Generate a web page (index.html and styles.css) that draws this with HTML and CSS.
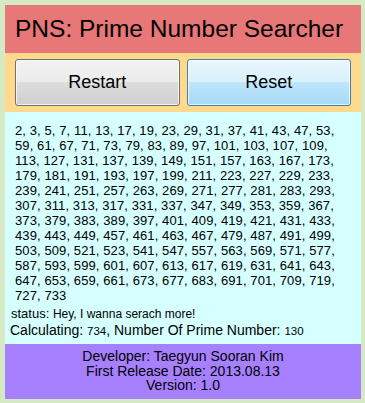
FILE: index.html
```html
<!DOCTYPE html>
<html lang="en">
<head>
  <meta charset="UTF-8">
  <meta name="viewport" content="width=device-width, initial-scale=1.0">
  <title>PNS: Prime Number Searcher</title>
  <link rel="stylesheet" href="styles.css">
</head>
<body>
  <div id="app">
    <h1 id="title">PNS: Prime Number Searcher</h1>

    <div id="controls">
      <button class="btn">Restart</button>
      <button class="btn btn-active">Reset</button>
    </div>

    <div id="output">
      <div id="primes">2, 3, 5, 7, 11, 13, 17, 19, 23, 29, 31, 37, 41, 43, 47, 53, 59, 61, 67, 71, 73, 79, 83, 89, 97, 101, 103, 107, 109, 113, 127, 131, 137, 139, 149, 151, 157, 163, 167, 173, 179, 181, 191, 193, 197, 199, 211, 223, 227, 229, 233, 239, 241, 251, 257, 263, 269, 271, 277, 281, 283, 293, 307, 311, 313, 317, 331, 337, 347, 349, 353, 359, 367, 373, 379, 383, 389, 397, 401, 409, 419, 421, 431, 433, 439, 443, 449, 457, 461, 463, 467, 479, 487, 491, 499, 503, 509, 521, 523, 541, 547, 557, 563, 569, 571, 577, 587, 593, 599, 601, 607, 613, 617, 619, 631, 641, 643, 647, 653, 659, 661, 673, 677, 683, 691, 701, 709, 719, 727, 733</div>
      <div id="status">status: <span class="small">Hey, I wanna serach more!</span></div>
      <div id="calc">Calculating: <span class="small">734</span>, Number Of Prime Number: <span class="small">130</span></div>
    </div>

    <div id="footer">
      <div>Developer: Taegyun Sooran Kim</div>
      <div>First Release Date: 2013.08.13</div>
      <div>Version: 1.0</div>
    </div>
  </div>
</body>
</html>
```

FILE: styles.css
```css
body {
  font-family: 'Liberation Sans', Arial, sans-serif;
  margin: 0;
  padding: 5px 4px 5px 5px;
  background: #d5e9c5;
  color: #000;
}

#app {
  width: 356px;
  display: flex;
  flex-direction: column;
}

#title {
  margin: 0;
  height: 48px;
  padding: 0 10px;
  font-size: 24.5px;
  font-weight: normal;
  line-height: 48px;
  background: #e87777;
}

#controls {
  display: flex;
  gap: 7px;
  padding: 6px 10px;
  background: #ffd98c;
}

.btn {
  flex: 1;
  height: 47px;
  font-family: 'Liberation Sans', Arial, sans-serif;
  font-size: 18px;
  color: #000;
  border: 1px solid #707070;
  border-radius: 3px;
  box-shadow: inset 0 0 0 1px rgba(255, 255, 255, 0.7);
  background: linear-gradient(#f2f2f2, #ebebeb 50%, #dddddd 50%, #cfcfcf);
  cursor: pointer;
}

.btn-active {
  border-color: #3c7fb1;
  background: linear-gradient(#eaf6fd, #d9f0fc 50%, #bee6fd 50%, #a7d9f5);
}

#output {
  background: #d6ffff;
  padding: 11px 0 5px;
}

#primes {
  padding: 0 10px;
  font-size: 13px;
  letter-spacing: 0.1px;
  line-height: 15px;
  margin-bottom: 3px;
}

#status {
  padding: 0 6px;
  font-size: 13px;
  line-height: 16px;
}

#calc {
  padding: 0 5px;
  font-size: 14px;
  line-height: 16px;
}

.small {
  font-size: 12px;
}

#calc .small {
  font-size: 11.5px;
}

#footer {
  background: #a680ff;
  padding: 5px 0 6px;
  text-align: center;
  font-size: 14px;
  line-height: 14.5px;
}
```
